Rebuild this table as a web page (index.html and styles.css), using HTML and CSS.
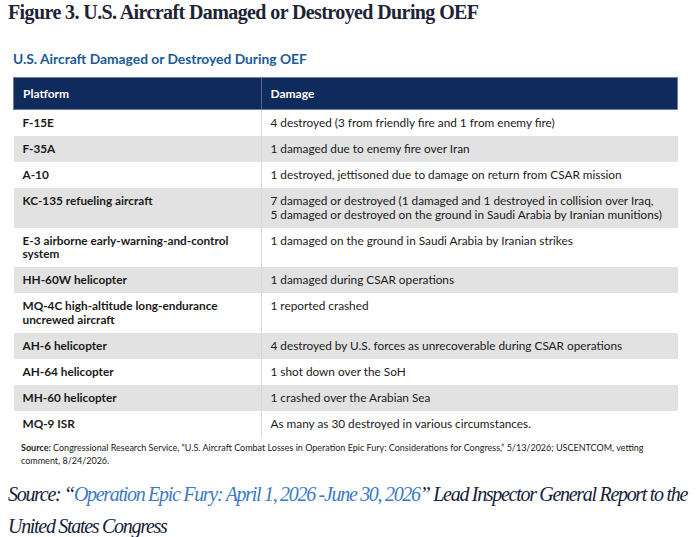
FILE: index.html
```html
<!DOCTYPE html>
<html>
<head>
<meta charset="utf-8">
<link rel="stylesheet" href="styles.css">
</head>
<body>
<h1 class="fig-title">Figure 3. U.S. Aircraft Damaged or Destroyed During OEF</h1>
<div class="figure">
  <h2 class="tbl-title">U.S. Aircraft Damaged or Destroyed During OEF</h2>
  <table class="tbl">
    <thead>
      <tr><th class="c1">Platform</th><th class="c2">Damage</th></tr>
    </thead>
    <tbody>
      <tr><td class="c1">F-15E</td><td class="c2">4 destroyed (3 from friendly fire and 1 from enemy fire)</td></tr>
      <tr class="alt"><td class="c1">F-35A</td><td class="c2">1 damaged due to enemy fire over Iran</td></tr>
      <tr><td class="c1">A-10</td><td class="c2">1 destroyed, jettisoned due to damage on return from CSAR mission</td></tr>
      <tr class="alt"><td class="c1">KC-135 refueling aircraft</td><td class="c2">7 damaged or destroyed (1 damaged and 1 destroyed in collision over Iraq,<br>5 damaged or destroyed on the ground in Saudi Arabia by Iranian munitions)</td></tr>
      <tr><td class="c1">E-3 airborne early-warning-and-control<br>system</td><td class="c2">1 damaged on the ground in Saudi Arabia by Iranian strikes</td></tr>
      <tr class="alt"><td class="c1">HH-60W helicopter</td><td class="c2">1 damaged during CSAR operations</td></tr>
      <tr><td class="c1">MQ-4C high-altitude long-endurance<br>uncrewed aircraft</td><td class="c2">1 reported crashed</td></tr>
      <tr class="alt"><td class="c1">AH-6 helicopter</td><td class="c2">4 destroyed by U.S. forces as unrecoverable during CSAR operations</td></tr>
      <tr><td class="c1">AH-64 helicopter</td><td class="c2">1 shot down over the SoH</td></tr>
      <tr class="alt"><td class="c1">MH-60 helicopter</td><td class="c2">1 crashed over the Arabian Sea</td></tr>
      <tr><td class="c1">MQ-9 ISR</td><td class="c2">As many as 30 destroyed in various circumstances.</td></tr>
    </tbody>
  </table>
  <p class="note"><b>Source:</b> Congressional Research Service, “U.S. Aircraft Combat Losses in Operation Epic Fury: Considerations for Congress,” 5/13/2026; USCENTCOM, vetting<br>comment, 8/24/2026.</p>
</div>
<p class="credit">Source: “<span class="link">Operation Epic Fury: April 1, 2026 -June 30, 2026</span>” Lead Inspector General Report to the United States Congress</p>
</body>
</html>
```
FILE: styles.css
```css
html, body {
  margin: 0;
  padding: 0;
  background: #ffffff;
}
body {
  padding: 0 8px;
  width: 683px;
}
.fig-title {
  margin: 0;
  padding-top: 1px;
  font-family: "Liberation Serif", serif;
  font-weight: bold;
  font-size: 20px;
  line-height: 22px;
  color: #1c2436;
  letter-spacing: -0.6px;
}
.figure {
  padding: 27px 13px 0 5px;
}
.tbl-title {
  margin: 0 0 9px 0;
  font-family: "Lato", sans-serif;
  font-weight: bold;
  font-size: 13.8px;
  line-height: 18px;
  color: #1b5a96;
}
.tbl {
  width: 665px;
  border-collapse: collapse;
  font-family: "Lato", sans-serif;
  font-size: 11.8px;
  line-height: 13.5px;
  color: #1a1a1a;
}
.tbl th {
  background: #0f2a5c;
  color: #ffffff;
  font-weight: bold;
  font-size: 12px;
  text-align: left;
  height: 31px;
  padding: 0 8px 0 9px;
  border-top: 1px solid #6f7ea0;
  border-bottom: 1px solid #6f7ea0;
}
.tbl th.c1 { border-left: 1px solid #6f7ea0; }
.tbl th.c2 { border-right: 1px solid #6f7ea0; border-left: 1px solid #55688f; }
.tbl td {
  vertical-align: top;
  padding: 6px 8px 6.5px 9px;
}
.tbl td.c1 {
  width: 230px;
  font-weight: bold;
}
.tbl td.c2 {
  border-left: 1px solid #d8d8d8;
}
.tbl tr.alt td {
  background: #e2e2e2;
}
.note {
  margin: 4px 0 0 8px;
  font-family: "Lato", sans-serif;
  font-size: 9px;
  line-height: 13px;
  color: #1a1a1a;
}
.credit {
  margin: 11px 0 0 0;
  font-family: "Liberation Serif", serif;
  font-style: italic;
  font-size: 20px;
  line-height: 32px;
  letter-spacing: -1.3px;
  word-spacing: 0;
  color: #15213a;
}
.credit .link {
  color: #3b7ac8;
}
```
